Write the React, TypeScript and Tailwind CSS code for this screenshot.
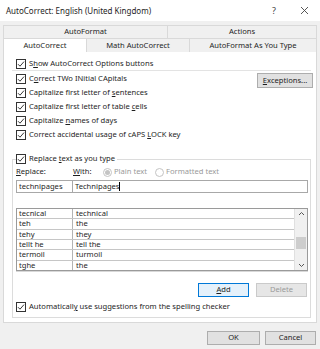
import type { ReactNode } from 'react'

function Check({ checked = true }: { checked?: boolean }) {
  return (
    <span className="w-[10px] h-[10px] border border-[#333] bg-white flex items-center justify-center shrink-0">
      {checked && (
        <svg width="8" height="8" viewBox="0 0 8 8">
          <path d="M1 4.2 L3 6.2 L7 1.6" fill="none" stroke="#222" strokeWidth="0.9" />
        </svg>
      )}
    </span>
  )
}

function CheckRow({ children, className = '' }: { children: ReactNode; className?: string }) {
  return (
    <div className={`flex items-center gap-[3px] ${className}`}>
      <Check />
      <span className="whitespace-nowrap">{children}</span>
    </div>
  )
}

function Radio({ on }: { on?: boolean }) {
  return (
    <span className="w-[9px] h-[9px] rounded-full border border-[#c4c4c4] bg-white flex items-center justify-center">
      {on && <span className="w-[5px] h-[5px] rounded-full bg-[#c4c4c4]" />}
    </span>
  )
}

const rows = [
  ['tecnical', 'technical'],
  ['teh', 'the'],
  ['tehy', 'they'],
  ['tellt he', 'tell the'],
  ['termoil', 'turmoil'],
  ['tghe', 'the'],
]

export default function App() {
  return (
    <div className="w-[320px] h-[349px] bg-[#f0f0f0] overflow-hidden font-['Noto_Sans',sans-serif] text-[7.6px] text-[#1e1e1e] leading-none">
      <div className="h-[21px] bg-white flex items-center pl-[6px] pr-[11px]">
        <span className="text-[8px] flex-1">AutoCorrect: English (United Kingdom)</span>
        <span className="text-[9px] mr-[24px] text-[#444]">?</span>
        <svg width="9" height="9" viewBox="0 0 9 9">
          <path d="M1 1 L8 8 M8 1 L1 8" stroke="#444" strokeWidth="0.9" />
        </svg>
      </div>

      <div className="mx-[3px] mt-[4px]">
        <div className="flex h-[13px] border-t border-l border-r border-[#d9d9d9]">
          <div className="w-[164px] border-r border-[#d9d9d9] flex items-center justify-center">AutoFormat</div>
          <div className="flex-1 flex items-center justify-center">Actions</div>
        </div>
        <div className="flex h-[14px]">
          <div className="w-[84px] bg-white border-t border-l border-r border-[#d9d9d9] flex items-center justify-center">
            AutoCorrect
          </div>
          <div className="w-[103px] border-t border-r border-[#d9d9d9] flex items-center justify-center">
            Math AutoCorrect
          </div>
          <div className="flex-1 border-t border-r border-[#d9d9d9] flex items-center justify-center">
            AutoFormat As You Type
          </div>
        </div>
      </div>

      <div className="mx-[3px] h-[271px] bg-white border border-t-0 border-[#d9d9d9] pt-[6px]">
        <CheckRow className="h-[12px] pl-[12px]">
          S<u>h</u>ow AutoCorrect Options buttons
        </CheckRow>
        <div className="ml-[8px] mr-[5px] border-t border-[#e3e3e3]" />
        <div className="flex pl-[12px] mt-[1px]">
          <div className="flex-1">
            <CheckRow className="h-[14px]">
              C<u>o</u>rrect TWo INitial CApitals
            </CheckRow>
            <CheckRow className="h-[14px]">
              Capitalize first letter of <u>s</u>entences
            </CheckRow>
            <CheckRow className="h-[14px]">
              Capitalize first letter of table <u>c</u>ells
            </CheckRow>
            <CheckRow className="h-[14px]">
              Capitalize <u>n</u>ames of days
            </CheckRow>
            <CheckRow className="h-[14px]">
              Correct accidental usage of cAPS <u>L</u>OCK key
            </CheckRow>
          </div>
          <button className="mt-[1px] mr-[3px] w-[56px] h-[15px] bg-[#e1e1e1] border border-[#adadad] flex items-center justify-center">
            <u>E</u>xceptions...
          </button>
        </div>

        <fieldset className="ml-[8px] mr-[5px] mt-[12px] border border-[#dcdcdc] pl-[3px] pr-[2px] pb-[4px]">
          <legend className="flex items-center gap-[3px] pr-[2px]">
            <Check />
            <span className="whitespace-nowrap">
              Replace <u>t</u>ext as you type
            </span>
          </legend>
          <div className="flex items-center h-[12px] mt-[2px]">
            <span className="w-[57px]">
              <u>R</u>eplace:
            </span>
            <span className="w-[30px]">
              <u>W</u>ith:
            </span>
            <span className="flex items-center gap-[2px] text-[#9a9a9a] w-[52px]">
              <Radio on />
              Plain text
            </span>
            <span className="flex items-center gap-[2px] text-[#9a9a9a]">
              <Radio />
              Formatted text
            </span>
          </div>
          <div className="flex h-[13px] mt-[2px]">
            <div className="w-[57px] border border-[#a8a8a8] flex items-center pl-[2px]">technipages</div>
            <div className="flex-1 border border-l-0 border-[#a8a8a8] flex items-center pl-[2px]">
              Technipages<span className="w-px h-[9px] bg-black" />
            </div>
          </div>

          <div className="mt-[15px] h-[63px] border border-[#9a9a9a] flex shadow-[0_1px_0_#d8d8d8]">
            <div className="flex-1 flex flex-col">
              {rows.map(([a, b], i) => (
                <div
                  key={a}
                  className={`flex flex-1 ${i < rows.length - 1 ? 'border-b border-[#c6c6c6]' : ''}`}
                >
                  <span className="w-[56px] border-r border-[#b4b4b4] pl-[2px] flex items-center">{a}</span>
                  <span className="flex-1 pl-[3px] flex items-center">{b}</span>
                </div>
              ))}
            </div>
            <div className="w-[13px] bg-[#f0f0f0] border-l border-[#e0e0e0] flex flex-col items-center justify-between py-[2px]">
              <svg width="7" height="5" viewBox="0 0 7 5">
                <path d="M1 4 L3.5 1.5 L6 4" fill="none" stroke="#555" strokeWidth="1" />
              </svg>
              <div className="flex-1 w-full flex flex-col justify-center pt-[14px] pb-[8px]">
                <div className="mx-[1px] h-[12px] bg-[#cdcdcd]" />
              </div>
              <svg width="7" height="5" viewBox="0 0 7 5">
                <path d="M1 1 L3.5 3.5 L6 1" fill="none" stroke="#555" strokeWidth="1" />
              </svg>
            </div>
          </div>

          <div className="flex justify-end gap-[7px] mt-[12px] pr-[1px]">
            <button className="w-[51px] h-[14px] bg-[#e5f1fb] border border-[#0078d7] flex items-center justify-center">
              <u>A</u>dd
            </button>
            <button className="w-[51px] h-[14px] bg-[#e6e6e6] border border-[#cacaca] text-[#9a9a9a] flex items-center justify-center">
              Delete
            </button>
          </div>

          <CheckRow className="h-[12px] mt-[4px]">
            Automaticall<u>y</u> use suggestions from the spelling checker
          </CheckRow>
        </fieldset>
      </div>

      <div className="flex justify-end gap-[5px] mt-[8px] pr-[4px]">
        <button className="w-[53px] h-[14px] bg-[#e1e1e1] border border-[#adadad] flex items-center justify-center">OK</button>
        <button className="w-[51px] h-[14px] bg-[#e1e1e1] border border-[#adadad] flex items-center justify-center">Cancel</button>
      </div>
    </div>
  )
}
